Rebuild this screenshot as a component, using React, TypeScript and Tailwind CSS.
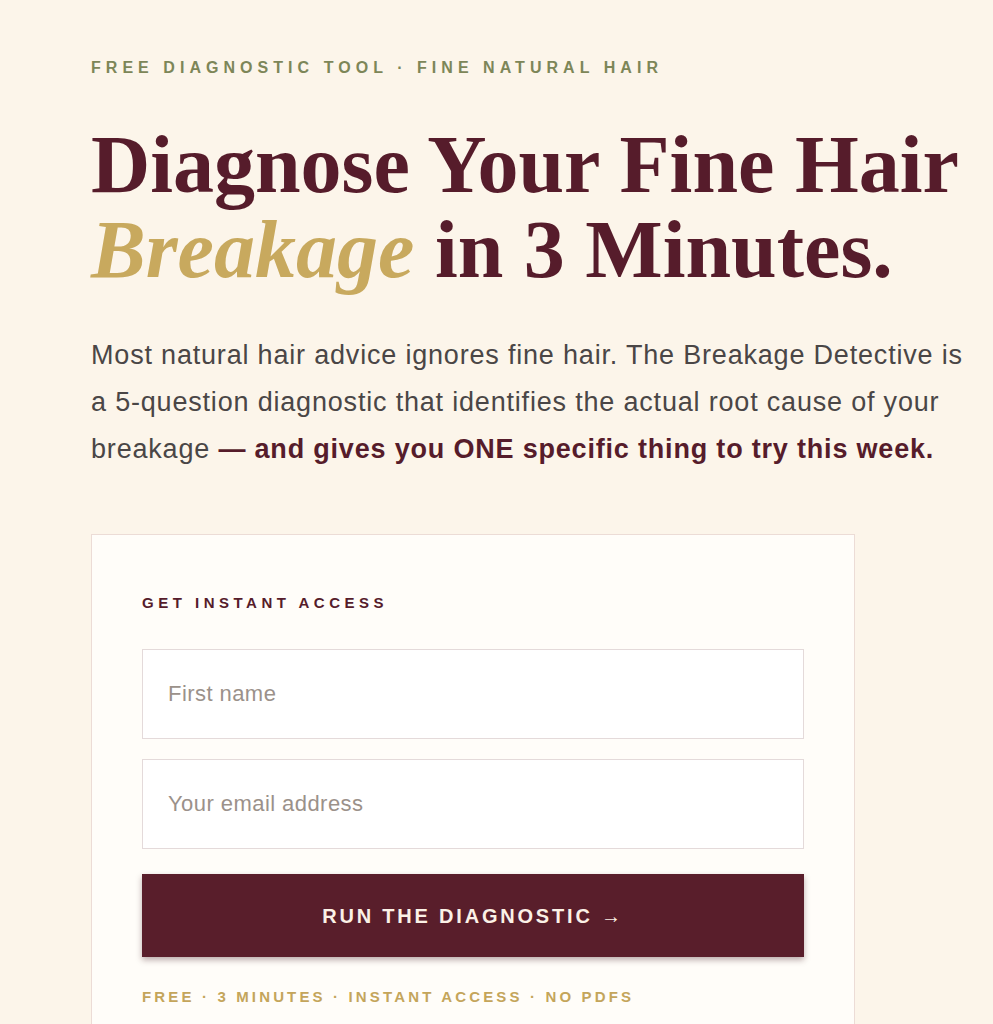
export default function App() {
  const sans = { fontFamily: '"Liberation Sans", Arial, sans-serif' }
  return (
    <div className="min-h-screen w-full bg-[#fcf5ea] text-[#561c2b]" style={sans}>
      <div className="pl-[91px] pr-[10px] pt-[59px]">
        <p className="text-[16px] font-bold tracking-[0.315em] text-[#7d8658] leading-[18px]">
          FREE DIAGNOSTIC TOOL · FINE NATURAL HAIR
        </p>

        <h1
          className="mt-[45px] text-[82px] font-bold leading-[85px] text-[#561c2b]"
          style={{ fontFamily: '"Liberation Serif", "Times New Roman", serif' }}
        >
          Diagnose Your Fine Hair
          <br />
          <em className="text-[#c8a95e]">Breakage</em> in 3 Minutes.
        </h1>

        <p className="mt-[40px] max-w-[882px] text-[27px] tracking-[0.03em] leading-[47px] text-[#4a4646]">
          Most natural hair advice ignores fine hair. The Breakage Detective is a 5-question diagnostic that
          identifies the actual root cause of your breakage{' '}
          <strong className="font-bold text-[#561c2b]">— and gives you ONE specific thing to try this week.</strong>
        </p>

        <div className="mt-[61px] w-[764px] border-[1.5px] border-[#ecdcd6] bg-[#fffdf9] px-[50px] pt-[59px] pb-[40px]">
          <p className="text-[15px] font-bold tracking-[0.3em] leading-[18px] text-[#561c2b]">GET INSTANT ACCESS</p>

          <div className="mt-[37px] flex flex-col gap-[20px]">
            <input
              type="text"
              placeholder="First name"
              className="h-[90px] w-full border-[1.5px] border-[#e4dada] bg-white px-[25px] text-[22px] tracking-[0.02em] text-[#333] placeholder:text-[#9b918a] outline-none"
            />
            <input
              type="email"
              placeholder="Your email address"
              className="h-[90px] w-full border-[1.5px] border-[#e4dada] bg-white px-[25px] text-[22px] tracking-[0.02em] text-[#333] placeholder:text-[#9b918a] outline-none"
            />
          </div>

          <button className="mt-[25px] h-[83px] w-full bg-[#591e2b] text-[20px] font-bold tracking-[0.14em] text-[#fbf1e6] shadow-[0_3px_6px_rgba(60,20,30,0.35)]">
            RUN THE DIAGNOSTIC →
          </button>

          <p className="mt-[31px] text-[15px] font-bold tracking-[0.21em] leading-[18px] text-[#c4a55b]">
            FREE · 3 MINUTES · INSTANT ACCESS · NO PDFS
          </p>
        </div>
      </div>
    </div>
  )
}
